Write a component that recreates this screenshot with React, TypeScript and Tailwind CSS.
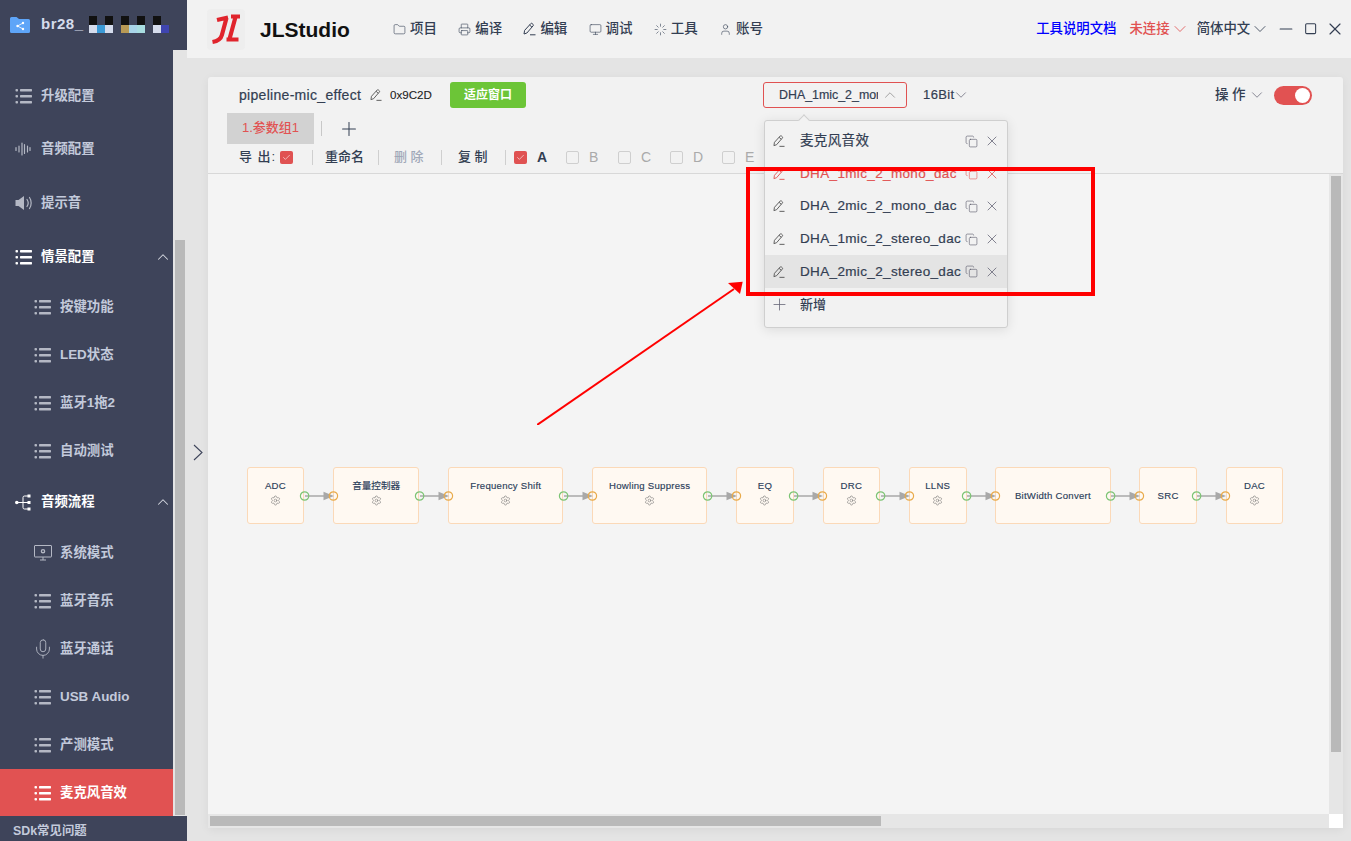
import { ChevronDown, ChevronUp, Copy, Folder, Loader, Minus, Monitor, Plus, Printer, Settings, Square, User, X, Mic, Check } from "lucide-react"

type NavItem = {
  label: string
  icon: "list" | "wave" | "sound" | "flow" | "system" | "mic"
  child?: boolean
  open?: boolean
  active?: boolean
}

const navItems: NavItem[] = [
  { label: "升级配置", icon: "list" },
  { label: "音频配置", icon: "wave" },
  { label: "提示音", icon: "sound" },
  { label: "情景配置", icon: "list", open: true },
  { label: "按键功能", icon: "list", child: true },
  { label: "LED状态", icon: "list", child: true },
  { label: "蓝牙1拖2", icon: "list", child: true },
  { label: "自动测试", icon: "list", child: true },
  { label: "音频流程", icon: "flow", open: true },
  { label: "系统模式", icon: "system", child: true },
  { label: "蓝牙音乐", icon: "list", child: true },
  { label: "蓝牙通话", icon: "mic", child: true },
  { label: "USB Audio", icon: "list", child: true },
  { label: "产测模式", icon: "list", child: true },
  { label: "麦克风音效", icon: "list", child: true, active: true },
]

const nodes = [
  { name: "ADC", width: "w-[57.6px]", gear: true },
  { name: "音量控制器", width: "w-[86.4px]", gear: true },
  { name: "Frequency Shift", width: "w-[115.2px]", gear: true },
  { name: "Howling Suppress", width: "w-[115.2px]", gear: true },
  { name: "EQ", width: "w-[57.6px]", gear: true },
  { name: "DRC", width: "w-[57.6px]", gear: true },
  { name: "LLNS", width: "w-[57.6px]", gear: true },
  { name: "BitWidth Convert", width: "w-[115.2px]", gear: false },
  { name: "SRC", width: "w-[57.6px]", gear: false },
  { name: "DAC", width: "w-[57.6px]", gear: true },
]

const presets = ["麦克风音效", "DHA_1mic_2_mono_dac", "DHA_2mic_2_mono_dac", "DHA_1mic_2_stereo_dac", "DHA_2mic_2_stereo_dac"]

// pixelated part of the project name
const mosaic = [
  ["#111", "#d5dcec"],
  ["", "#3b9ad6"],
  ["#111", "#d5dcec"],
  ["", ""],
  ["#111", "#b89a55"],
  ["", "#a8d4e8"],
  ["#111", "#a8dde0"],
  ["", ""],
  ["#111", "#d5dcec"],
  ["", "#3f45b0"],
]

function ListIcon({ className }: { className?: string }) {
  return (
    <svg viewBox="0 0 17 16" className={className} fill="currentColor">
      <rect x="0.5" y="1" width="2.5" height="2.5" rx="0.8" />
      <rect x="0.5" y="7" width="2.5" height="2.5" rx="0.8" />
      <rect x="0.5" y="13" width="2.5" height="2.5" rx="0.8" />
      <rect x="5" y="1" width="12" height="2.4" rx="0.6" />
      <rect x="5" y="7" width="12" height="2.4" rx="0.6" />
      <rect x="5" y="13" width="12" height="2.4" rx="0.6" />
    </svg>
  )
}

function NavIcon({ icon, white }: { icon: NavItem["icon"]; white: boolean }) {
  const tone = white ? "text-white" : "text-[#b4b8c4]"
  if (icon === "wave")
    return (
      <svg viewBox="0 0 16 14" className={`w-[16px] h-[14px] ${tone}`} stroke="currentColor" strokeWidth="1.2" strokeLinecap="round">
        <path d="M1 5.5v3M4 4v6M7 1v12M9.5 2.5v9M12.5 4v6M15 5.5v3" />
      </svg>
    )
  if (icon === "sound")
    return (
      <svg viewBox="0 0 17 16" className={`w-[17px] h-[16px] ${tone}`} fill="none">
        <path d="M0.5 5h3L9 1v14l-5.5-4h-3z" fill="currentColor" />
        <path d="M12 4.5c1.4 2 1.4 5 0 7M14.5 2.5c2.2 3 2.2 8 0 11" stroke="currentColor" strokeWidth="1.2" strokeLinecap="round" />
      </svg>
    )
  if (icon === "flow")
    return (
      <svg viewBox="0 0 16 17" className={`w-[16px] h-[17px] ${tone}`} fill="currentColor">
        <circle cx="1.8" cy="8.5" r="1.8" />
        <rect x="12.5" y="0.5" width="3" height="3" />
        <rect x="12.5" y="7" width="3" height="3" />
        <rect x="12.5" y="13.5" width="3" height="3" />
        <path d="M2 8.5h11M13 2H9.5A1.5 1.5 0 0 0 8 3.5v10A1.5 1.5 0 0 0 9.5 15H13" fill="none" stroke="currentColor" strokeWidth="1" />
      </svg>
    )
  if (icon === "system")
    return (
      <svg viewBox="0 0 18 16" className={`w-[18px] h-[16px] ${tone}`} fill="none" stroke="currentColor" strokeWidth="1">
        <rect x="0.5" y="0.5" width="17" height="11.5" rx="0.5" />
        <circle cx="9" cy="6.2" r="1.6" strokeWidth="1.4" />
        <path d="M6 15h6M9 12v3" />
      </svg>
    )
  if (icon === "mic") return <Mic className={`-ml-[2px] w-[22px] h-[22px] ${tone}`} strokeWidth={1} />
  return <ListIcon className={`w-[17px] h-[16px] ${tone}`} />
}

function PenIcon({ className }: { className?: string }) {
  return (
    <svg viewBox="0 0 13 14" className={className} fill="none" stroke="currentColor" strokeWidth="1">
      <path d="M1 12l.6-3.6L7.8 1.6a1 1 0 0 1 1.4 0l.9.8a1 1 0 0 1 0 1.4L3.9 11z" />
      <path d="M6.6 3l2.4 2.2M7 12.8h5.5" />
    </svg>
  )
}

function CheckBox({ on }: { on?: boolean }) {
  if (on)
    return (
      <span className="flex w-[13px] h-[13px] items-center justify-center rounded-[2px] bg-[#e05252]">
        <Check className="w-[9px] h-[9px] text-white" strokeWidth={1.5} />
      </span>
    )
  return <span className="block w-[13px] h-[13px] rounded-[2px] border border-[#cfcfcf]" />
}

function Connector() {
  return (
    <div className="relative w-[28.8px] h-[14px] shrink-0">
      <svg viewBox="0 0 38 14" className="absolute left-[-4.6px] top-0 w-[38px] h-[14px] overflow-visible" fill="none">
        <path d="M5 7h19" stroke="#a8a8a8" strokeWidth="1.5" />
        <path d="M23.5 2.8L34 7l-10.5 4.2z" fill="#a8a8a8" />
        <circle cx="4.6" cy="7" r="4.2" stroke="#7cc474" strokeWidth="1.2" />
        <circle cx="33.4" cy="7" r="4.2" stroke="#e8aa4a" strokeWidth="1.2" />
      </svg>
    </div>
  )
}

export default function App() {
  return (
    <div className="flex w-[1351px] h-[841px] overflow-hidden bg-[#e4e4e4] text-[#333e52] [font-family:'Liberation_Sans','Noto_Sans_CJK_SC',sans-serif]">
      {/* SIDEBAR */}
      <aside className="flex flex-col w-[187px] h-full shrink-0">
        <div className="flex items-center h-[50px] bg-[#3e445a] pl-[10px] pb-[1px]">
          <svg viewBox="0 0 20 16" className="w-[20px] h-[16px] shrink-0">
            <path d="M0 1.5A1.5 1.5 0 0 1 1.5 0h5L9 2h9.5A1.5 1.5 0 0 1 20 3.5v11a1.5 1.5 0 0 1-1.5 1.5h-17A1.5 1.5 0 0 1 0 14.5z" fill="#5ea5f8" />
            <g fill="#fff">
              <circle cx="13" cy="6" r="1.2" />
              <circle cx="7.5" cy="9" r="1.2" />
              <circle cx="13" cy="12" r="1.2" />
            </g>
            <path d="M13 6L7.5 9l5.5 3" fill="none" stroke="#fff" strokeWidth="0.8" />
          </svg>
          <span className="ml-[11px] w-[48.3px] text-[15px] font-bold tracking-[0.5px] text-[#d5dcec]">br28_</span>
          <div className="flex">
            {mosaic.map((c, i) => (
              <div key={i} className="flex flex-col w-[8px]">
                <span className="h-[8.6px]" style={{ background: c[0] }} />
                <span className="h-[8px]" style={{ background: c[1] }} />
              </div>
            ))}
          </div>
        </div>

        <div className="flex flex-1 min-h-0">
          <nav className="w-[173px] bg-[#3e445a] pt-[19px]">
            {navItems.map((item) => {
              const white = !!item.active || !!item.open
              return (
                <div
                  key={item.label}
                  className={`flex items-center ${item.child ? "h-[48px] pl-[34px]" : "h-[53.6px] pl-[15px]"} ${item.active ? "bg-[#e15252]" : ""}`}
                >
                  <span className="flex w-[26px] shrink-0 items-center">
                    <NavIcon icon={item.icon} white={white} />
                  </span>
                  <span className={`text-[13.4px] font-bold ${white ? "text-white" : "text-[#c3cadb]"}`}>{item.label}</span>
                  {item.open && <ChevronUp className="ml-auto mr-[1.5px] w-[18px] h-[18px] text-[#d5d8e0]" strokeWidth={1.4} />}
                </div>
              )
            })}
          </nav>
          <div className="w-[14px] pl-[2px] pr-[2px] pt-[190px]">
            <div className="h-[575px] bg-[#b9b9b9]" />
          </div>
        </div>

        <div className="relative flex items-center h-[25px] bg-[#3e445a] pl-[13px] pt-[6px]">
          <span className="text-[12.4px] font-bold text-[#c3cadb]">SDk常见问题</span>
        </div>
      </aside>

      <div className="flex flex-col flex-1 min-w-0">
        {/* TOP BAR */}
        <header className="flex items-center h-[58px] shrink-0 bg-[#f2f2f2]">
          <div className="ml-[20px] w-[38px] h-[41px] rounded-[4px] bg-[#eeeeee]">
            <svg viewBox="0 0 38 41" className="w-[38px] h-[41px]" fill="none" stroke="#e0242c" strokeWidth="4.2" strokeLinejoin="round">
              <path d="M10 11l11-2.5M19.5 9l-4.6 17c-.9 3.6-3.6 6-9.4 7" />
              <path d="M24 7.5h9M28.5 8l-6 22M19.5 30.5h12" />
            </svg>
          </div>
          <span className="ml-[15px] w-[133px] text-[21px] font-bold leading-none text-[#111]">JLStudio</span>
          <div className="flex text-[13.5px] font-medium">
            {[
              { t: "项目", i: <Folder className="w-[13px] h-[13px]" strokeWidth={1.1} /> },
              { t: "编译", i: <Printer className="w-[13px] h-[13px]" strokeWidth={1.1} /> },
              { t: "编辑", i: <PenIcon className="w-[13px] h-[14px]" /> },
              { t: "调试", i: <Monitor className="w-[13px] h-[13px]" strokeWidth={1.1} /> },
              { t: "工具", i: <Loader className="w-[13px] h-[13px]" strokeWidth={1.1} /> },
              { t: "账号", i: <User className="w-[13px] h-[13px]" strokeWidth={1.1} /> },
            ].map((m) => (
              <div key={m.t} className="flex items-center w-[65.2px] gap-[4px]">
                {m.i}
                <span>{m.t}</span>
              </div>
            ))}
          </div>
          <div className="flex items-center ml-auto text-[13.4px] font-medium">
            <span className="text-[#0000ff]">工具说明文档</span>
            <span className="ml-[13px] text-[#e15252]">未连接</span>
            <ChevronDown className="-mr-[3px] w-[20px] h-[20px] text-[#e15252]" strokeWidth={1} />
            <span className="ml-[10px]">简体中文</span>
            <ChevronDown className="-mr-[4px] w-[20px] h-[20px]" strokeWidth={1} />
            <Minus className="ml-[9.5px] w-[20px] h-[20px]" strokeWidth={1.4} />
            <Square className="ml-[8px] w-[13.3px] h-[13.3px]" strokeWidth={1.9} />
            <X className="ml-[8px] mr-[6px] w-[20px] h-[20px]" strokeWidth={1.4} />
          </div>
        </header>

        <div className="flex flex-1 min-h-0">
          <div className="flex w-[21px] shrink-0 items-center justify-center pt-[5px]">
            <svg viewBox="0 0 10 17" className="w-[10px] h-[17px]" fill="none" stroke="#3e445a" strokeWidth="1.1">
              <path d="M1 1l8 7.5L1 16" />
            </svg>
          </div>

          {/* CARD */}
          <section className="relative flex flex-col w-[1135px] h-[751px] mt-[19px] rounded-[3px] bg-[#f2f2f2] shadow-[0_2px_10px_rgba(0,0,0,0.06)]">
            <div className="flex items-center h-[26px] mt-[5px] pl-[31px] pr-[31px]">
              <span className="w-[131px] text-[14px] tracking-[0.3px] whitespace-nowrap [-webkit-text-stroke:0.2px]">pipeline-mic_effect</span>
              <PenIcon className="w-[12px] h-[14px] text-[#555]" />
              <span className="ml-[8px] w-[60px] text-[11.6px] text-[#222] [-webkit-text-stroke:0.1px]">0x9C2D</span>
              <button className="flex items-center justify-center w-[76px] h-[26px] rounded-[3px] bg-[#6cc537] text-[12px] font-bold text-white">适应窗口</button>
              <div className="flex items-center ml-[237px] w-[144px] h-[26px] rounded-[3px] border border-[#e05252] pl-[15px] pr-[7px]">
                <span className="flex-1 overflow-hidden whitespace-nowrap text-[12.4px] [-webkit-text-stroke:0.2px]">DHA_1mic_2_mono_dac</span>
                <ChevronUp className="ml-[3px] w-[18px] h-[18px] text-[#888]" strokeWidth={1} />
              </div>
              <span className="ml-[16px] text-[13px] tracking-[0.4px] [-webkit-text-stroke:0.2px]">16Bit</span>
              <ChevronDown className="-ml-[3px] w-[18px] h-[18px] text-[#667]" strokeWidth={1} />
              <span className="ml-auto text-[13.5px] font-medium tracking-[3.5px] whitespace-nowrap">操作</span>
              <ChevronDown className="-ml-[1px] w-[18px] h-[18px] text-[#667]" strokeWidth={1} />
              <span className="flex items-center justify-end ml-[8px] w-[38px] h-[19px] rounded-full bg-[#e15252] pr-[2px]">
                <span className="block w-[15px] h-[15px] rounded-full bg-white" />
              </span>
            </div>

            <div className="flex items-center h-[31px] mt-[5px] pl-[19px]">
              <span className="flex items-center justify-center w-[87px] h-[31px] pb-[2px] bg-[#d2d2d2] text-[13px] font-medium text-[#e15252]">1.参数组1</span>
              <span className="ml-[7px] w-px h-[15px] bg-[#c8c8c8]" />
              <Plus className="ml-[16px] w-[22px] h-[22px]" strokeWidth={1.1} />
            </div>

            <div className="flex items-center h-[30px] shrink-0 border-b border-[#d8d8d8] pl-[31px] pb-[3px] text-[13px] font-medium">
              <span className="w-[41px] tracking-[1px] whitespace-nowrap">导 出:</span>
              <CheckBox on />
              <span className="ml-[19px] w-px h-[15px] bg-[#cfcfcf]" />
              <span className="ml-[12px] w-[40px] whitespace-nowrap">重命名</span>
              <span className="ml-[13px] w-px h-[15px] bg-[#cfcfcf]" />
              <span className="ml-[15px] w-[32px] text-[#a0a8b8] whitespace-nowrap">删 除</span>
              <span className="ml-[15px] w-px h-[15px] bg-[#cfcfcf]" />
              <span className="ml-[16px] w-[32px] whitespace-nowrap">复 制</span>
              <span className="ml-[15px] w-px h-[15px] bg-[#cfcfcf]" />
              <span className="ml-[8px]"><CheckBox on /></span>
              <span className="ml-[10px] w-[29px] text-[14px] font-bold">A</span>
              {["B", "C", "D", "E"].map((l) => (
                <div key={l} className="flex items-center w-[52px] text-[14px] font-normal text-[#aaa]">
                  <CheckBox />
                  <span className="ml-[10px]">{l}</span>
                </div>
              ))}
            </div>

            {/* CANVAS */}
            <div className="flex flex-1 min-h-0">
              <div className="flex flex-1 items-center pl-[38.6px] pt-[3px] bg-[#f4f4f4]">
                {nodes.map((n, i) => (
                  <div key={n.name} className="flex items-center">
                    {i > 0 && <Connector />}
                    <div className={`flex flex-col items-center justify-center shrink-0 h-[57.6px] rounded-[3px] border border-[#fbd9b8] bg-[#fff9f2] ${n.width} ${n.gear ? "pb-[5px]" : ""}`}>
                      <span className={`text-[9.6px] leading-[12px] whitespace-nowrap text-[#2c3e5a] [-webkit-text-stroke:0.15px] ${n.name === "音量控制器" ? "" : "tracking-[0.25px]"}`}>{n.name}</span>
                      {n.gear && <Settings className="mt-[3px] w-[11px] h-[11px] text-[#666]" strokeWidth={1.1} />}
                    </div>
                  </div>
                ))}
              </div>
              <div className="w-[14px] bg-[#e6e6e6] px-[2px] pt-[2px]">
                <div className="h-[576px] bg-[#b9b9b9]" />
              </div>
            </div>
            <div className="flex h-[14px] shrink-0">
              <div className="flex-1 bg-[#e6e6e6] px-[2px] py-[2px]">
                <div className="w-[671px] h-[10px] bg-[#b9b9b9]" />
              </div>
              <div className="w-[14px] bg-white" />
            </div>

            {/* preset dropdown */}
            <div className="absolute left-[556px] top-[43px] w-[244px] h-[208px] rounded-[3px] border border-[#cfcfcf] bg-[#f2f2f2] pt-[4px] shadow-[0_2px_12px_rgba(0,0,0,0.1)] z-10">
              <span className="absolute left-[35px] top-[-5px] w-[8px] h-[8px] rotate-45 border-l border-t border-[#cfcfcf] bg-[#f2f2f2]" />
              {presets.map((p, i) => (
                <div
                  key={p}
                  className={`flex items-center h-[32.6px] pl-[8px] text-[13.5px] tracking-[0.35px] [-webkit-text-stroke:0.2px] ${i === 4 ? "bg-[#e4e4e4]" : ""} ${i === 1 ? "text-[#e15252]" : ""}`}
                >
                  <PenIcon className={`w-[12px] h-[14px] shrink-0 ${i === 1 ? "text-[#e15252]" : "text-[#555]"}`} />
                  <span className="ml-[15px] w-[165px] whitespace-nowrap">{p}</span>
                  <Copy className={`w-[13px] h-[13px] shrink-0 ${i === 1 ? "text-[#e15252]" : "text-[#556]"}`} strokeWidth={1.1} />
                  <X className={`ml-[6px] w-[16px] h-[16px] shrink-0 ${i === 1 ? "text-[#e15252]" : "text-[#667]"}`} strokeWidth={1.2} />
                </div>
              ))}
              <div className="flex items-center h-[32.6px] pl-[5px] text-[13px] font-medium">
                <Plus className="w-[19px] h-[19px] text-[#667]" strokeWidth={1} />
                <span className="ml-[11px]">新增</span>
              </div>
            </div>

            {/* annotations over the screenshot */}
            <div className="absolute left-[538px] top-[90px] w-[349px] h-[129px] border-[4px] border-[#ff0000] z-20" />
            <svg viewBox="0 0 210 145" className="absolute left-[329px] top-[203px] w-[210px] h-[145px] z-20" fill="none">
              <path d="M0 145L197 9" stroke="#ff0000" strokeWidth="2" />
              <path d="M205.7 1.7L191 3l12 11z" fill="#ff0000" />
            </svg>
          </section>
        </div>
      </div>
    </div>
  )
}
